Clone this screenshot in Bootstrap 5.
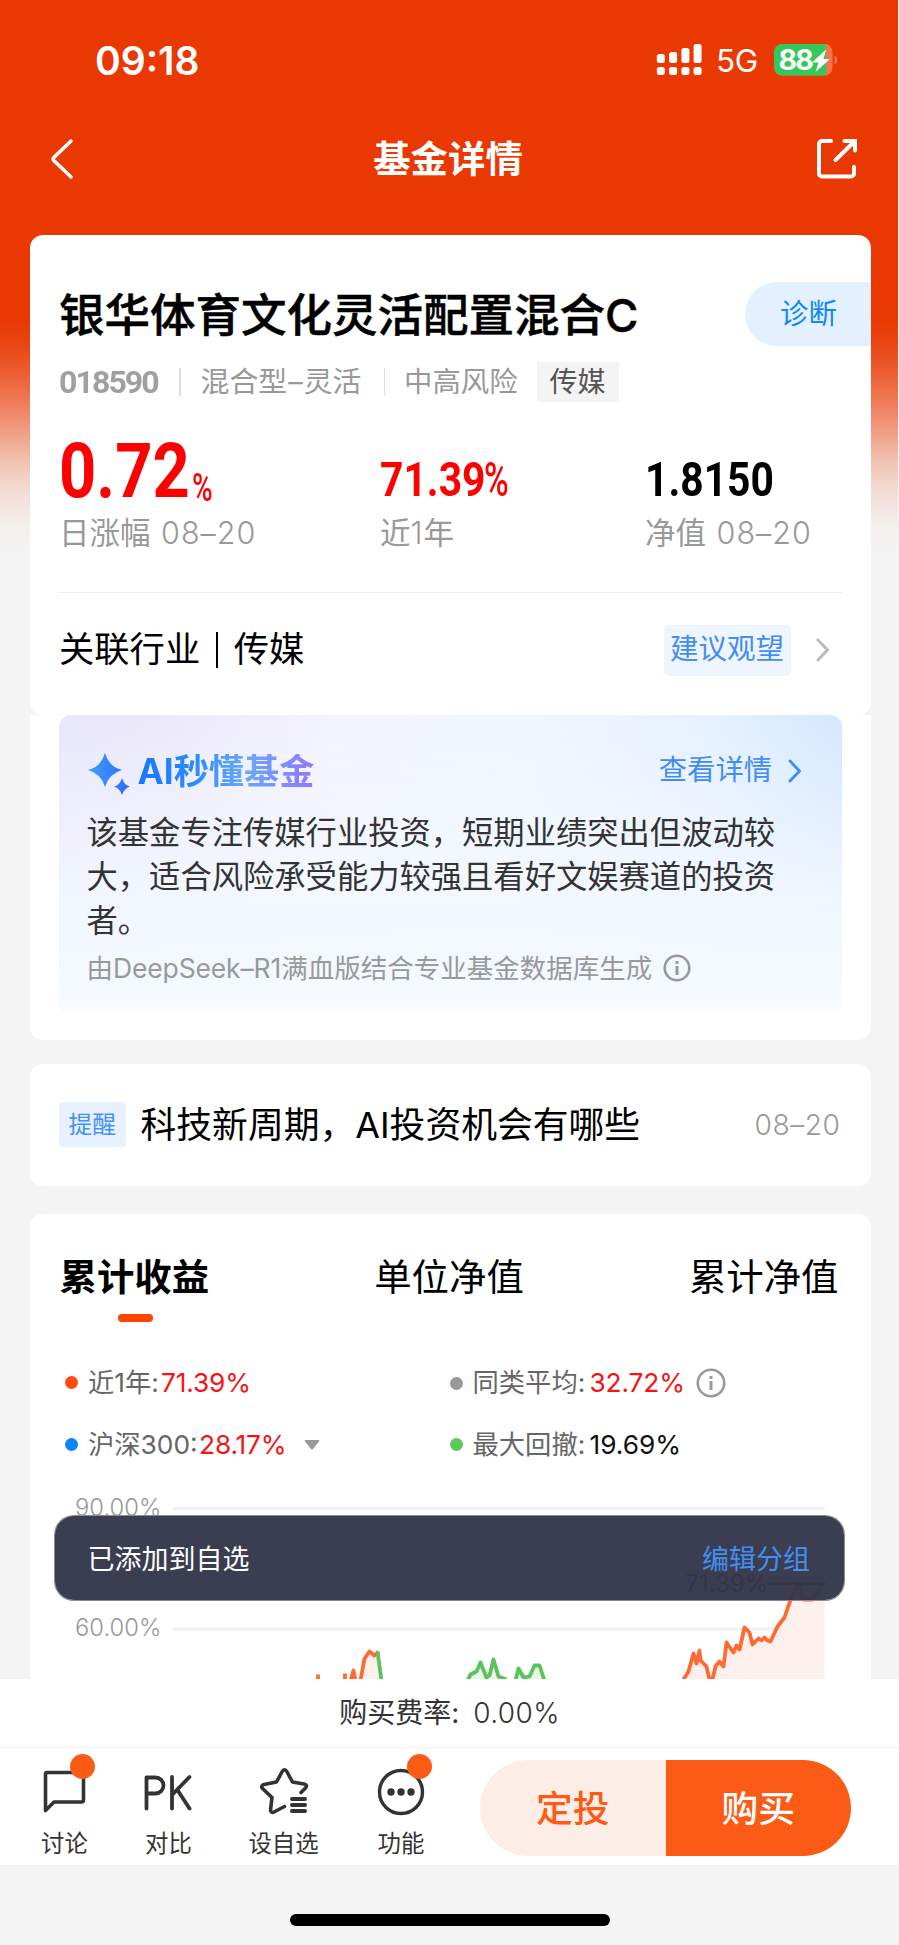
<!DOCTYPE html>
<html lang="zh-CN">
<head>
<meta charset="utf-8">
<meta name="viewport" content="width=device-width, initial-scale=1">
<title>基金详情</title>
<link rel="stylesheet" href="https://cdn.jsdelivr.net/npm/bootstrap@5.3.0/dist/css/bootstrap.min.css">
<style>
body{width:899px;height:1945px;overflow:hidden;background:#f4f4f4;color:#000;font-family:"Inter","Noto Sans CJK SC",sans-serif;line-height:1;white-space:nowrap}
svg{display:block;flex:none}
.page-bg{background:linear-gradient(#e93802 0,#e93802 320px,#ea4614 345px,#ec5c30 372px,#ee7e5c 405px,#f0a289 435px,#f2c6b7 465px,#f3dfd8 495px,#f4eeec 525px,#f4f4f4 555px) no-repeat 0 0/898px 560px}
.status{height:120px;padding:0 60px 0 95px}
.clock{font-size:39px;font-weight:600;letter-spacing:0}
.titlebar{height:78px;padding:0 41px 0 50px}
.titlebar h1{font-size:37.4px;font-weight:600;margin:2px 0 0 6px}
.panel{margin:0 28.5px 0 29.5px;background:#fff}
.fund{height:480px;margin-top:36.5px;border-radius:13px}
.fund-name{font-size:45.5px;font-weight:500;margin:5px 0 0;-webkit-text-stroke:.5px #000}
.diag{width:126px;height:64px;border-radius:32px 0 0 32px;background:#e2f1fd;color:#1189f5;font-size:28.4px}
.meta{height:40px;font-size:28.9px;color:#999}
.vr-line{width:1.5px;height:28px;background:#ddd}
.din{font-family:Roboto,sans-serif;display:inline-block;transform-origin:0 50%}
.topic{width:82px;height:40px;background:#f4f4f4;color:#555;font-size:28px}
.up{color:#fe0000}
.stat-label{font-size:30.5px;color:#999}
.stat-label .light{letter-spacing:1px}
.stat-label .date{margin-left:2px}
.light{font-weight:300}
.hr-line{height:1px;background:#eee}
.advice{width:127px;height:51px;background:#eef5ff;border-radius:5px;color:#438ef0;font-size:28.5px}
.ai-wrap{height:325px;border-radius:0 0 13px 13px;padding:0 28.5px 30px 29px}
.ai{height:295px;border-radius:12px 12px 3px 3px;padding:37px 28px 0;background:linear-gradient(rgba(243,248,255,0) 0,rgba(243,248,255,.9) 62%,#f3f8ff 85%,#f8fcff 100%),linear-gradient(97deg,#e8e6fa 0,#ece9fb 14%,#f4f4fe 34%,#f0f6ff 58%,#e5f1ff 80%,#cfe5ff 100%)}
.ai-title{font-size:35.2px;font-weight:700;background:linear-gradient(90deg,#1677ff 0,#2f8efb 35%,#68a9f8 60%,#9079ff 100%);-webkit-background-clip:text;background-clip:text;color:transparent}
.ai-link{font-size:28.3px;color:#3f8ef0}
.ai-text{font-size:31.3px;line-height:44px;color:#333;margin:0}
.ai-src{font-size:26.5px;color:#999}
.notice{height:121.5px;margin-top:24.5px;border-radius:13px;padding:0 30px 0 29px}
.remind{width:67.5px;height:45px;background:#e8f2fe;border-radius:4px;color:#4290f5;font-size:23.7px}
.perf{height:465.5px;margin-top:28px;border-radius:13px 13px 0 0}
.tabs{height:128px;padding:0 32px 0 30px;font-size:37.4px}
.tab-item.active{font-weight:700}
.ink{left:88.5px;top:100px;width:35px;height:8px;border-radius:4px;background:#ff4400}
.legend-row{height:62px;font-size:26.3px;color:#666}
.legend-row>div{width:384.5px}
.dot{width:13px;height:13px;border-radius:50%;margin-right:10px}
.red{color:#f31414;letter-spacing:-.15px}
.toast-bar{left:55px;top:1515.5px;width:789px;height:84.5px;border-radius:19px;background:rgba(52,54,74,.965);box-shadow:0 0 0 1px #8b8b98;color:#fff;font-size:27px;padding:3px 34px 0 32.5px;z-index:2}
.fee{height:69px;font-size:28px;color:#333;border-bottom:1.5px solid #efefef}
.bottom{height:117px;padding:0 48px 0 0}
.nav-cell{height:117px;font-size:23.4px;color:#333}
.nav-cell svg{margin:0 auto}
.badge-dot{width:25px;height:25px;border-radius:50%;background:#fb5b14}
.act{width:185.5px;height:96px;font-size:36.8px;font-weight:500;padding-top:3px}
.act-a{background:#fdede7;color:#fb5b14;border-radius:48px 0 0 48px}
.act-b{background:#fb5b14;color:#fff;border-radius:0 48px 48px 0}
.home{width:320px;height:12px;border-radius:6px;background:#000;margin:49px 0 0 290px}
</style>
</head>
<body>
<div class="page-bg position-relative">
  <div class="status d-flex align-items-center justify-content-between text-white">
    <span class="clock">09:18</span>
    <svg width="183" height="40" viewBox="0 0 183 40" fill="#fff">
      <rect x="0.800" y="14" width="8" height="9" rx="2.500"/><rect x="13.100" y="12" width="8" height="11" rx="2.500"/><rect x="25.400" y="8" width="8" height="15" rx="2.500"/><rect x="37.600" y="4" width="8" height="19" rx="2.500"/>
      <rect x="0.800" y="27" width="8" height="8" rx="2.500"/><rect x="13.100" y="27" width="8" height="8" rx="2.500"/><rect x="25.400" y="27" width="8" height="8" rx="2.500"/><rect x="37.600" y="27" width="8" height="8" rx="2.500"/>
      <text x="60" y="32.300" font-size="31.500" letter-spacing="-.3" font-weight="400">5G</text>
      <path d="M126 4h42.500a8 8 0 0 1 8 8v15.500a8 8 0 0 1-8 8H126z" fill="#f5734f"/>
      <path d="M126 4h44v31.500h-44a8 8 0 0 1-8-8V12a8 8 0 0 1 8-8z" fill="#34c759"/>
      <path d="M178.500 15.500c3.500 1 3.500 8 0 9z" fill="#f5734f"/>
      <text x="122.500" y="30.200" font-size="28.500" font-weight="700" letter-spacing="-1.800">88</text>
      <path d="M170 9.500l-14 13h6.500l-3 9.500 14.500-13h-6.500z"/>
    </svg>
  </div>
  <div class="titlebar d-flex align-items-center justify-content-between text-white">
    <svg width="24" height="42" viewBox="0 0 24 42" fill="none" stroke="#fff" stroke-width="3.600" stroke-linecap="round" stroke-linejoin="round"><path d="M21 3L3.800 19.500a2 2 0 0 0 0 3L21 39"/></svg>
    <h1>基金详情</h1>
    <svg width="42" height="42" viewBox="0 0 42 42" fill="none" stroke="#fff" stroke-width="4" stroke-linecap="round"><path d="M15 3H6a3 3 0 0 0-3 3v29.500a3 3 0 0 0 3 3h29a3 3 0 0 0 3-3V29M19.500 22L38 4M28.500 3H39v9.500"/></svg>
  </div>

  <section class="panel fund overflow-hidden">
    <div class="d-flex justify-content-between align-items-center" style="padding:47.5px 0 0 29.5px">
      <h2 class="fund-name">银华体育文化灵活配置混合C</h2>
      <div class="diag d-flex align-items-center justify-content-center"><span style="margin-left:2px">诊断</span></div>
    </div>
    <div class="meta d-flex align-items-center" style="margin:16px 0 0 29.5px">
      <span class="din fw-bold" style="font-size:32px;width:120px;letter-spacing:-1.900px;opacity:.93">018590</span>
      <span class="vr-line"></span>
      <span style="margin-left:20px;width:183px">混合型<span style="margin:0 1px">–</span>灵活</span>
      <span class="vr-line"></span>
      <span style="margin-left:19px;font-size:28.400px">中高风险</span>
      <span class="topic d-flex align-items-center justify-content-center" style="margin-left:19px">传媒</span>
    </div>
    <div class="d-flex" style="margin:33px 0 0 29.5px;height:74px">
      <div class="up d-flex align-items-end" style="width:321px">
        <span class="din fw-bold" style="font-size:76.500px;line-height:76px;width:133px;transform:scaleX(.85)">0.72</span><span class="din fw-medium" style="font-size:39px;line-height:41px;width:24px;transform:scaleX(.72)">%</span>
      </div>
      <div class="up d-flex align-items-end" style="width:265px">
        <span class="din fw-bold" style="font-size:48px;line-height:58px;width:104px;transform:scaleX(.85)">71.39</span><span class="din fw-medium" style="font-size:48px;line-height:58px;transform:scaleX(.7)">%</span>
      </div>
      <div class="d-flex align-items-end"><span class="din fw-bold" style="font-size:48px;line-height:58px;transform:scaleX(.85)">1.8150</span></div>
    </div>
    <div class="stat-label d-flex" style="margin:8.5px 0 0 29.5px">
      <span style="width:321px">日涨幅 <span class="light date">08–20</span></span>
      <span style="width:265px">近<span class="light">1</span>年</span>
      <span>净值 <span class="light date">08–20</span></span>
    </div>
    <div class="hr-line" style="margin:44px 28.5px 0 29px"></div>
    <div class="d-flex align-items-center" style="height:114px;padding:0 41px 0 29.5px;font-size:35.300px">
      <span>关联行业</span><span style="width:2.5px;height:36px;background:#000;margin:0 15.5px"></span><span>传媒</span>
      <span class="advice ms-auto d-flex align-items-center justify-content-center"><span style="margin-top:-1px">建议观望</span></span>
      <svg width="14" height="24" viewBox="0 0 14 24" fill="none" stroke="#bbb" stroke-width="3" stroke-linecap="round" style="margin-left:25px"><path d="M2 2l9.500 10L2 22"/></svg>
    </div>
  </section>

  <section class="panel ai-wrap">
    <div class="ai">
      <div class="d-flex align-items-center" style="height:42px">
        <svg width="44" height="44" viewBox="0 0 44 44"><defs><linearGradient id="g" x1="0" x2="1"><stop stop-color="#3f9dff"/><stop offset="1" stop-color="#2a6cff"/></linearGradient></defs><path fill="url(#g)" d="M18 2Q22 16 35 19Q22 22.500 18 36Q14 22.500 1 19Q14 16 18 2zM35 27Q37 34 43 35.500Q37 37.500 35 44Q33 37.500 27 35.500Q33 34 35 27z"/></svg>
        <span class="ai-title" style="margin:-2px 0 0 7px">AI秒懂基金</span>
        <span class="ai-link ms-auto" style="margin-top:-4px">查看详情</span>
        <svg width="14" height="24" viewBox="0 0 14 24" fill="none" stroke="#3f8ef0" stroke-width="2.800" stroke-linecap="round" style="margin:-4px 12px 0 16px"><path d="M2 2l9.500 10L2 22"/></svg>
      </div>
      <p class="ai-text" style="margin-top:17px">该基金专注传媒行业投资，短期业绩突出但波动较<br>大，适合风险承受能力较强且看好文娱赛道的投资<br>者。</p>
      <div class="ai-src d-flex align-items-center" style="margin-top:11.500px"><span>由<span style="letter-spacing:-.15px">DeepSeek–R1</span>满血版结合专业基金数据库生成</span>
        <svg width="28" height="28" viewBox="0 0 28 28" style="margin-left:11px" fill="none" stroke="#999" stroke-width="2.600"><circle cx="14" cy="14" r="12.300"/><path d="M14 12v9M14 7v3" stroke-width="3"/></svg></div>
    </div>
  </section>

  <section class="panel notice d-flex align-items-center">
    <span class="remind d-flex align-items-center justify-content-center">提醒</span>
    <span style="font-size:35.800px;margin:3px 0 0 14.5px">科技新周期，AI投资机会有哪些</span>
    <span class="ms-auto light" style="font-size:28.200px;letter-spacing:.5px;color:#999;margin-top:1px">08–20</span>
  </section>

  <section class="panel perf">
    <nav class="tabs position-relative d-flex align-items-center justify-content-between"><span class="tab-item active">累计收益</span><span class="tab-item">单位净值</span><span class="tab-item">累计净值</span><span class="ink position-absolute"></span></nav>
    <div style="padding:10.5px 0 0 35.5px">
      <div class="legend-row d-flex align-items-center">
        <div class="d-flex align-items-center"><span class="dot" style="background:#ff4a0a"></span><span style="width:73px">近1年:</span><span class="red">71.39%</span></div>
        <div class="d-flex align-items-center"><span class="dot" style="background:#999"></span><span style="width:117px">同类平均:</span><span class="red">32.72%</span>
          <svg width="30" height="30" viewBox="0 0 30 30" style="margin-left:11px" fill="none" stroke="#999" stroke-width="2.600"><circle cx="15" cy="15" r="13.200"/><path d="M15 13v9M15 8v3" stroke-width="3"/></svg></div>
      </div>
      <div class="legend-row d-flex align-items-center">
        <div class="d-flex align-items-center"><span class="dot" style="background:#0a84ff"></span><span style="width:111px">沪深300:</span><span class="red">28.17%</span><svg width="16" height="10" style="margin-left:17px"><path d="M1.500 0h13q1.500 0 .5 1.500L9 9q-1 1-2 0L1 1.500Q0 0 1.500 0z" fill="#999"/></svg></div>
        <div class="d-flex align-items-center"><span class="dot" style="background:#5cc95c"></span><span style="width:117px">最大回撤:</span><span style="color:#111">19.69%</span></div>
      </div>
    </div>
    <svg width="841" height="203" viewBox="29.500 1476.500 841 203" fill="none" stroke-width="3.800" stroke-linejoin="round">
      <path d="M172 1509H824M172 1629.500H824" stroke="#f1f1f2" stroke-width="3"/>
      <g font-size="23.800" fill="#999" font-weight="300"><text x="74.500" y="1516">90.00%</text><text x="74.500" y="1636">60.00%</text></g>
      <path d="M683 1680L689 1665 693 1654 696 1664 699 1651 705 1665 712 1680 718 1663 723 1668 727 1643 735 1652 739 1646 744 1628 753 1645 760 1639 770 1642 779 1625 787 1611 796 1584 803 1600 812 1600 824 1584V1680z" fill="#fdf0ec"/>
      <path d="M359 1680L365 1658 371 1652 376 1654 381 1680z" fill="#fdf0ec"/>
      <path d="M466 1680L475 1672 481 1663 487 1678 493 1660 498 1678 505 1680zM514 1680L518 1670 528 1676 535 1666 541 1667 544 1680z" fill="#eaf7e8"/>
      <g stroke="#fd6a32"><path d="M683 1680L688 1672 693 1654 696 1664 699 1651 700 1661 706 1667 709 1680H712L715 1667 719 1662 723 1667 726 1643 733 1653 736 1646 739 1650 744 1628 749 1633 752 1645 758 1639 761 1641 764 1638 767 1641 770 1642 777 1627 784 1618 787 1609 791 1598 798 1583 803 1600 812 1600 824 1582"/><path d="M317.500 1675V1681M344.500 1674V1681M350 1681L353 1671 355 1681M360 1681L364 1659 369 1652 374 1656 378 1652"/></g>
      <path d="M377 1652L381 1681M467 1681L470 1675 476 1672 480 1663 486 1678 489 1676 493 1660 498 1677 506 1680M515 1681L518 1669 523 1678 529 1677 534 1666 539 1666 544 1681" stroke="#5cc35a"/>
      <text x="685" y="1592" font-size="24" fill="#222">71.39%</text><path d="M767 1584H824" stroke="#222" stroke-width="2.500"/>
    </svg>
  </section>

  <div class="toast-bar position-absolute d-flex align-items-center justify-content-between"><span>已添加到自选</span><span style="color:#438ef0">编辑分组</span></div>
</div>

<footer class="bg-white">
  <div class="fee d-flex align-items-center justify-content-center"><span style="margin-top:-1px">购买费率<span style="margin-right:6px">:</span> <span class="light" style="letter-spacing:.4px">0.00%</span></span></div>
  <div class="bottom d-flex align-items-center">
    <div class="nav-cell position-relative text-center" style="width:129px">
      <span class="badge-dot position-absolute" style="left:70px;top:6px"></span>
      <svg width="44" height="44" viewBox="0 0 44 44" style="margin-top:22px" fill="none" stroke="#333" stroke-width="3.600" stroke-linejoin="round"><path d="M3.500 2.500h35a2 2 0 0 1 2 2V30a2 2 0 0 1-2 2H11L2.500 40.500V4a1.500 1.500 0 0 1 1.500-1.500z"/></svg>
      <div style="margin-top:17.5px">讨论</div>
    </div>
    <div class="nav-cell text-center" style="width:79px">
      <svg width="48" height="44" viewBox="0 0 48 44" style="margin-top:23px;position:relative;left:-1px" fill="none" stroke="#333" stroke-width="3.800" stroke-linecap="round" stroke-linejoin="round"><path d="M2.500 37.500V6.500h9a7.500 7.500 0 0 1 0 16h-9M28 6v31.500M45.500 6L28 24M33.500 19L45.500 37.500"/></svg>
      <div style="margin-top:16.5px">对比</div>
    </div>
    <div class="nav-cell text-center" style="width:151px">
      <svg width="50" height="48" viewBox="0 0 50 48" style="margin-top:19px;position:relative;left:1px" fill="none" stroke="#333" stroke-width="3.600" stroke-linecap="round" stroke-linejoin="round"><path d="M41 25.500L45.500 21Q48 18 44 17L32.500 15 26.500 4Q24.500 1.500 22.500 4L16.500 15 4 17.500Q0 19 3 22L12 30.500 10.500 43Q11 46.500 14 45L24.500 39.500"/><path d="M32 32H45M32 38H45M32 44H45" stroke-width="4"/></svg>
      <div style="margin-top:16.5px">设自选</div>
    </div>
    <div class="nav-cell position-relative text-center" style="width:84px">
      <span class="badge-dot position-absolute" style="left:48px;top:6px"></span>
      <svg width="48" height="48" viewBox="0 0 48 48" style="margin-top:20px" fill="none" stroke="#333" stroke-width="3.400"><circle cx="24" cy="24" r="21.500"/><g fill="#333" stroke="none"><circle cx="14" cy="24" r="3.700"/><circle cx="24" cy="24" r="3.700"/><circle cx="34" cy="24" r="3.700"/></g></svg>
      <div style="margin-top:15.5px">功能</div>
    </div>
    <div class="ms-auto d-flex" style="margin-top:2px">
      <div class="act act-a d-flex align-items-center justify-content-center">定投</div>
      <div class="act act-b d-flex align-items-center justify-content-center">购买</div>
    </div>
  </div>
</footer>
<div class="home"></div>
<script src="https://cdn.jsdelivr.net/npm/bootstrap@5.3.0/dist/js/bootstrap.bundle.min.js"></script>
</body>
</html>
